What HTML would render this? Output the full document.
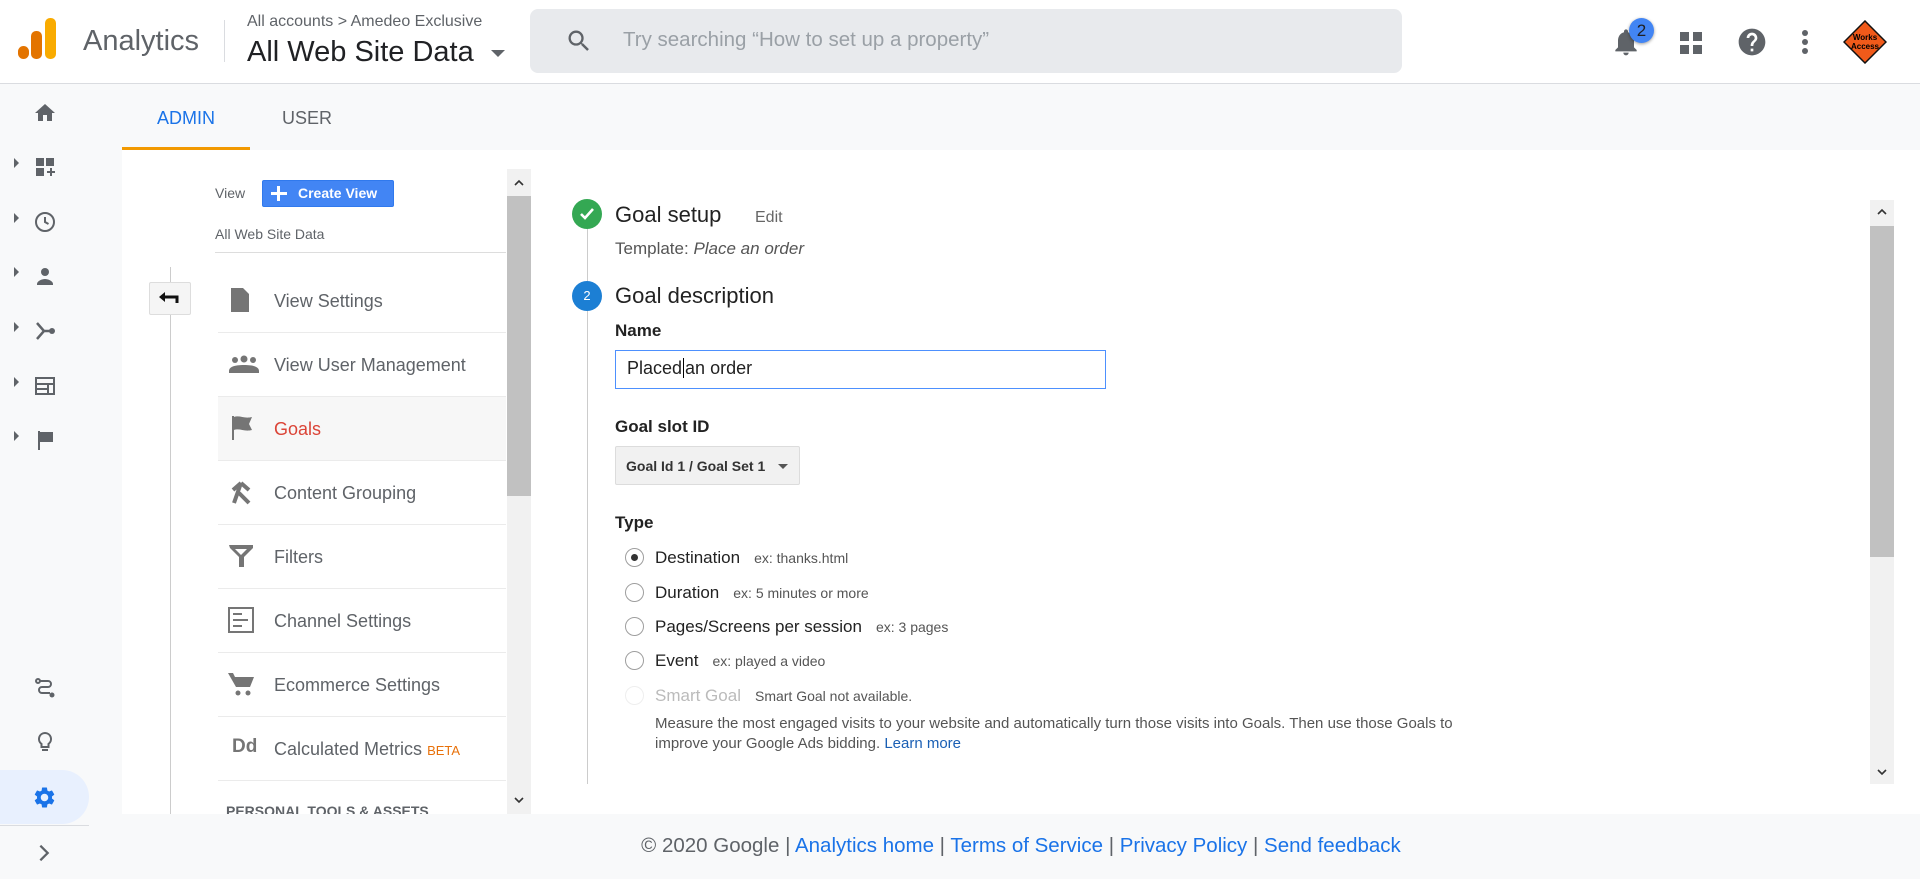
<!DOCTYPE html>
<html><head><meta charset="utf-8">
<style>
*{margin:0;padding:0;box-sizing:border-box}
body{width:1920px;height:879px;overflow:hidden;background:#f8f9fa;font-family:"Liberation Sans",Arial,sans-serif;position:relative;color:#202124}
.a{position:absolute}
.hdr{left:0;top:0;width:1920px;height:84px;background:#fff;border-bottom:1px solid #dadce0}
.nav-item{position:absolute;left:218px;width:288px;height:64px;border-bottom:1px solid #ebebeb}
.nav-item span{position:absolute;left:56px;top:22px;font-size:18px;color:#5f6368}
.nav-item svg{position:absolute;left:10px;top:18px}
.sb svg{position:absolute}
.radio{position:absolute;left:625px;width:19px;height:19px;border:1px solid #9e9e9e;border-radius:50%;background:#fff}
.rl{position:absolute;left:655px;font-size:17px;color:#222}
.rl i{font-style:normal;font-size:14px;color:#555;margin-left:14px}
</style></head><body>
<div class="a hdr"></div>
<div class="a" style="left:18px;top:46px;width:11px;height:13px;border-radius:6px;background:#e37400"></div>
<div class="a" style="left:31px;top:31px;width:11px;height:28px;border-radius:5px;background:#e37400"></div>
<div class="a" style="left:45px;top:18px;width:11px;height:41px;border-radius:5px;background:#f9ab00"></div>
<div class="a" style="left:83px;top:25px;font-size:29px;color:#5f6368">Analytics</div>
<div class="a" style="left:224px;top:20px;width:1px;height:42px;background:#dadce0"></div>
<div class="a" style="left:247px;top:13px;font-size:16px;color:#5f6368">All accounts &gt; Amedeo Exclusive</div>
<div class="a" style="left:247px;top:36px;font-size:29px;color:#202124">All Web Site Data</div>
<div class="a" style="left:491px;top:50px;width:0;height:0;border-left:7px solid transparent;border-right:7px solid transparent;border-top:7px solid #5f6368"></div>
<div class="a" style="left:530px;top:9px;width:872px;height:64px;background:#e8eaed;border-radius:8px"></div>
<svg class="a" style="left:565px;top:27px" width="28" height="28" viewBox="0 0 24 24"><path fill="#5f6368" d="M15.5 14h-.79l-.28-.27A6.47 6.47 0 0016 9.5 6.5 6.5 0 109.5 16c1.61 0 3.09-.59 4.230-1.57l.27.28v.79l5 4.99L20.49 19l-4.99-5zm-6 0C7.01 14 5 11.99 5 9.5S7.01 5 9.5 5 14 7.01 14 9.5 11.99 14 9.5 14z"/></svg>
<div class="a" style="left:623px;top:28px;font-size:20.5px;color:#9aa0a6">Try searching “How to set up a property”</div>
<svg class="a" style="left:1610px;top:26px" width="32" height="32" viewBox="0 0 24 24"><path fill="#5f6368" d="M12 22c1.1 0 2-.9 2-2h-4c0 1.1.9 2 2 2zm6-6v-5c0-3.07-1.63-5.64-4.5-6.320V4c0-.83-.67-1.5-1.5-1.5s-1.5.67-1.5 1.5v.68C7.64 5.36 6 7.92 6 11v5l-2 2v1h16v-1l-2-2z"/></svg>
<div class="a" style="left:1629px;top:18px;width:25px;height:25px;border-radius:50%;background:#4285f4;box-shadow:0 1px 3px rgba(0,0,0,.4);font-size:17px;text-align:center;line-height:25px;color:#202124">2</div>
<div class="a" style="left:1680px;top:32px;width:9px;height:9px;background:#5f6368"></div>
<div class="a" style="left:1693px;top:32px;width:9px;height:9px;background:#5f6368"></div>
<div class="a" style="left:1680px;top:45px;width:9px;height:9px;background:#5f6368"></div>
<div class="a" style="left:1693px;top:45px;width:9px;height:9px;background:#5f6368"></div>
<svg class="a" style="left:1736px;top:26px" width="32" height="32" viewBox="0 0 24 24"><path fill="#5f6368" d="M12 2C6.48 2 2 6.48 2 12s4.48 10 10 10 10-4.48 10-10S17.52 2 12 2zm1 17h-2v-2h2v2zm2.07-7.75l-.9.92C13.45 12.9 13 13.5 13 15h-2v-.5c0-1.1.45-2.1 1.17-2.830l1.24-1.26c.37-.36.59-.86.59-1.41 0-1.1-.9-2-2-2s-2 .9-2 2H8c0-2.21 1.79-4 4-4s4 1.79 4 4c0 .88-.36 1.680-.93 2.25z"/></svg>
<div class="a" style="left:1802px;top:30px;width:6px;height:6px;border-radius:50%;background:#5f6368"></div>
<div class="a" style="left:1802px;top:39px;width:6px;height:6px;border-radius:50%;background:#5f6368"></div>
<div class="a" style="left:1802px;top:48px;width:6px;height:6px;border-radius:50%;background:#5f6368"></div>
<svg class="a" style="left:1843px;top:20px" width="44" height="44" viewBox="0 0 44 44"><path d="M22 1L43 22 22 43 1 22z" fill="#f05a1a" stroke="#111" stroke-width="1.5"/><text x="22" y="20" font-size="8" font-weight="bold" text-anchor="middle" font-family="Liberation Sans Narrow,Liberation Sans">Works</text><text x="22" y="29" font-size="8" font-weight="bold" text-anchor="middle" font-family="Liberation Sans Narrow,Liberation Sans">Access</text></svg>

<div class="sb">
<svg style="left:33px;top:101px" width="24" height="24" viewBox="0 0 24 24"><path fill="#5f6368" d="M10 20v-6h4v6h5v-8h3L12 3 2 12h3v8z"/></svg>
<svg style="left:33px;top:155px" width="24" height="24" viewBox="0 0 24 24"><path fill="#5f6368" d="M3 3h8v8H3zM13 3h8v8h-8zM3 13h8v8H3zM17 13h2v3h3v2h-3v3h-2v-3h-3v-2h3z"/></svg>
<svg style="left:33px;top:210px" width="24" height="24" viewBox="0 0 24 24"><circle cx="12" cy="12" r="9" fill="none" stroke="#5f6368" stroke-width="2"/><path d="M12 7v5l3.5 2" fill="none" stroke="#5f6368" stroke-width="2"/></svg>
<svg style="left:33px;top:264px" width="24" height="24" viewBox="0 0 24 24"><circle cx="12" cy="8" r="4" fill="#5f6368"/><path fill="#5f6368" d="M4 20c0-3 5-5 8-5s8 2 8 5v1H4z"/></svg>
<svg style="left:33px;top:319px" width="24" height="24" viewBox="0 0 24 24"><path d="M4 4l7 8-7 8M11 12h6" fill="none" stroke="#5f6368" stroke-width="2.5"/><circle cx="19" cy="12" r="3" fill="#5f6368"/></svg>
<svg style="left:33px;top:374px" width="24" height="24" viewBox="0 0 24 24"><rect x="3" y="4" width="18" height="16" fill="none" stroke="#5f6368" stroke-width="2"/><path d="M3 10h18M3 15h12M15 10v10" stroke="#5f6368" stroke-width="2"/></svg>
<svg style="left:33px;top:428px" width="24" height="24" viewBox="0 0 24 24"><path fill="#5f6368" d="M5 3h2v19H5zM7 4h13v10H7z"/></svg>
<svg style="left:33px;top:676px" width="24" height="24" viewBox="0 0 24 24"><circle cx="5" cy="5" r="2" fill="none" stroke="#5f6368" stroke-width="2"/><circle cx="19" cy="19" r="2.5" fill="#5f6368"/><path d="M7 5h8a3 3 0 010 6H9a3 3 0 000 6h8" fill="none" stroke="#5f6368" stroke-width="2"/></svg>
<svg style="left:33px;top:730px" width="24" height="24" viewBox="0 0 24 24"><path d="M12 3a6 6 0 00-3.5 10.9V17h7v-3.1A6 6 0 0012 3z M9 20h6" fill="none" stroke="#5f6368" stroke-width="2"/></svg>
</div>
<div class="a" style="left:14px;top:158px;border-top:5px solid transparent;border-bottom:5px solid transparent;border-left:5px solid #5f6368"></div>
<div class="a" style="left:14px;top:213px;border-top:5px solid transparent;border-bottom:5px solid transparent;border-left:5px solid #5f6368"></div>
<div class="a" style="left:14px;top:267px;border-top:5px solid transparent;border-bottom:5px solid transparent;border-left:5px solid #5f6368"></div>
<div class="a" style="left:14px;top:322px;border-top:5px solid transparent;border-bottom:5px solid transparent;border-left:5px solid #5f6368"></div>
<div class="a" style="left:14px;top:377px;border-top:5px solid transparent;border-bottom:5px solid transparent;border-left:5px solid #5f6368"></div>
<div class="a" style="left:14px;top:431px;border-top:5px solid transparent;border-bottom:5px solid transparent;border-left:5px solid #5f6368"></div>
<div class="a" style="left:0;top:770px;width:89px;height:54px;background:#e8f0fe;border-radius:0 27px 27px 0"></div>
<svg class="a" style="left:32px;top:785px" width="25" height="25" viewBox="0 0 24 24"><path fill="#1a73e8" d="M19.14 12.94c.04-.3.06-.61.06-.94 0-.32-.02-.64-.07-.94l2.03-1.58a.49.49 0 00.12-.61l-1.92-3.32a.488.488 0 00-.59-.22l-2.39.96c-.5-.38-1.03-.7-1.62-.94l-.36-2.54a.484.484 0 00-.48-.41h-3.84c-.24 0-.43.17-.47.41l-.36 2.54c-.59.24-1.13.57-1.62.94l-2.39-.96c-.22-.08-.47 0-.59.22L2.74 8.87c-.12.21-.08.47.12.61l2.03 1.58c-.05.3-.09.63-.09.94s.02.64.07.94l-2.03 1.58a.49.49 0 00-.12.61l1.92 3.32c.12.22.37.29.59.22l2.39-.96c.5.38 1.030.7 1.62.94l.36 2.54c.05.24.24.41.48.41h3.84c.24 0 .44-.17.47-.41l.36-2.54c.59-.24 1.13-.56 1.62-.94l2.39.96c.22.08.47 0 .59-.22l1.92-3.32c.12-.22.07-.47-.12-.61l-2.01-1.58zM12 15.6c-1.98 0-3.6-1.62-3.6-3.6s1.62-3.6 3.6-3.6 3.6 1.62 3.6 3.6-1.62 3.6-3.6 3.6z"/></svg>
<div class="a" style="left:0;top:825px;width:89px;height:1px;background:#dadce0"></div>
<svg class="a" style="left:33px;top:842px" width="22" height="22" viewBox="0 0 24 24"><path d="M8 4l8 8-8 8" fill="none" stroke="#5f6368" stroke-width="2.5"/></svg>

<div class="a" style="left:157px;top:108px;font-size:18px;color:#1a73e8">ADMIN</div>
<div class="a" style="left:282px;top:108px;font-size:18px;color:#5f6368">USER</div>
<div class="a" style="left:122px;top:147px;width:128px;height:3px;background:#f29900"></div>

<div class="a" style="left:122px;top:150px;width:1798px;height:664px;background:#fff"></div>

<div class="a" style="left:215px;top:185px;font-size:14px;color:#5f6368">View</div>
<div class="a" style="left:262px;top:180px;width:132px;height:27px;background:#4285f4;border:1px solid #3079ed;border-radius:2px;color:#fff;font-size:14px;font-weight:bold;line-height:25px;padding-left:35px">Create View</div>
<div class="a" style="left:271px;top:192px;width:16px;height:3px;background:#fff"></div>
<div class="a" style="left:277px;top:186px;width:3px;height:15px;background:#fff"></div>
<div class="a" style="left:215px;top:226px;font-size:14px;color:#5f6368">All Web Site Data</div>
<div class="a" style="left:215px;top:252px;width:291px;height:1px;background:#ddd"></div>
<div class="a" style="left:170px;top:267px;width:1px;height:547px;background:#ccc"></div>
<div class="a" style="left:149px;top:282px;width:42px;height:33px;background:#f5f5f5;border:1px solid #ddd;border-radius:2px"></div>
<svg class="a" style="left:158px;top:287px" width="24" height="22" viewBox="0 0 24 22"><path d="M4 10h15v6" fill="none" stroke="#111" stroke-width="3"/><path d="M1 10l6-5v10z" fill="#111"/></svg>

<div class="nav-item" style="top:269px"><svg width="24" height="26" viewBox="0 0 24 26"><path fill="#757575" d="M3 1h12l6 6v18H3z"/></svg><span>View Settings</span></div>
<div class="nav-item" style="top:333px"><svg width="32" height="26" viewBox="0 0 32 26"><circle cx="7" cy="9" r="3" fill="#757575"/><circle cx="16" cy="8" r="3.5" fill="#757575"/><circle cx="25" cy="9" r="3" fill="#757575"/><path fill="#757575" d="M1 20c0-4 5-6 15-6s15 2 15 6v2H1z"/></svg><span>View User Management</span></div>
<div class="nav-item" style="top:397px;background:#f7f7f7"><svg width="28" height="26" viewBox="0 0 28 26"><path fill="#757575" d="M4 1h2v24H4zM6 2c6-2 10 2 18 0l-3 7 3 6c-8 2-12-2-18 0z"/></svg><span style="color:#db4437">Goals</span></div>
<div class="nav-item" style="top:461px"><svg width="26" height="26" viewBox="0 0 26 26"><path d="M13 4L6 24M13 4l-8 7M13 4l8 7M11 14l10 10" fill="none" stroke="#757575" stroke-width="4"/></svg><span>Content Grouping</span></div>
<div class="nav-item" style="top:525px"><svg width="26" height="26" viewBox="0 0 26 26"><path fill="#757575" d="M1 2h24v3l-9 9v10h-5V14L2 5z"/><path fill="#fff" d="M7 6h12l-6 6z"/></svg><span>Filters</span></div>
<div class="nav-item" style="top:589px"><svg width="26" height="26" viewBox="0 0 26 26"><rect x="1" y="1" width="24" height="24" fill="none" stroke="#757575" stroke-width="2"/><path d="M5 7h9M5 13h15M5 19h9" stroke="#757575" stroke-width="2"/></svg><span>Channel Settings</span></div>
<div class="nav-item" style="top:653px"><svg width="26" height="26" viewBox="0 0 26 26"><path fill="#757575" d="M0 2h5l2 4h19l-4 10H8z"/><circle cx="10" cy="22" r="2.5" fill="#757575"/><circle cx="20" cy="22" r="2.5" fill="#757575"/></svg><span>Ecommerce Settings</span></div>
<div class="nav-item" style="top:717px"><div class="a" style="left:14px;top:19px;font-size:19px;font-weight:bold;color:#757575">Dd</div><span>Calculated Metrics <b style="font-weight:normal;font-size:13px;color:#e8710a">BETA</b></span></div>
<div class="a" style="left:226px;top:803px;font-size:14px;font-weight:bold;color:#5f6368;height:11px;overflow:hidden;line-height:16px">PERSONAL TOOLS &amp; ASSETS</div>
<div class="a" style="left:507px;top:169px;width:24px;height:645px;background:#f1f1f1"></div>
<div class="a" style="left:507px;top:196px;width:24px;height:300px;background:#c1c1c1"></div>
<svg class="a" style="left:512px;top:176px" width="14" height="14" viewBox="0 0 14 14"><path d="M3 9l4-4 4 4" fill="none" stroke="#333" stroke-width="1.6"/></svg>
<svg class="a" style="left:512px;top:793px" width="14" height="14" viewBox="0 0 14 14"><path d="M3 5l4 4 4-4" fill="none" stroke="#333" stroke-width="1.6"/></svg>

<div class="a" style="left:587px;top:214px;width:1px;height:570px;background:#ccc"></div>
<div class="a" style="left:572px;top:199px;width:30px;height:30px;border-radius:50%;background:#34a853"></div>
<svg class="a" style="left:578px;top:205px" width="18" height="18" viewBox="0 0 18 18"><path d="M3 9l4 4 8-9" fill="none" stroke="#fff" stroke-width="2.6"/></svg>
<div class="a" style="left:615px;top:202px;font-size:22px;color:#222">Goal setup</div>
<div class="a" style="left:755px;top:209px;font-size:16px;color:#666">Edit</div>
<div class="a" style="left:615px;top:239px;font-size:17px;color:#555">Template: <i>Place an order</i></div>
<div class="a" style="left:572px;top:281px;width:30px;height:30px;border-radius:50%;background:#1c7fd4;color:#fff;font-size:13px;text-align:center;line-height:30px">2</div>
<div class="a" style="left:615px;top:283px;font-size:22px;color:#222">Goal description</div>
<div class="a" style="left:615px;top:321px;font-size:17px;font-weight:bold;color:#222">Name</div>
<div class="a" style="left:615px;top:350px;width:491px;height:39px;border:1px solid #4d90fe;background:#fff"></div>
<div class="a" style="left:627px;top:358px;font-size:18px;color:#222">Placed<span style="border-left:1px solid #000;margin:0 1px"></span>an order</div>
<div class="a" style="left:615px;top:417px;font-size:17px;font-weight:bold;color:#222">Goal slot ID</div>
<div class="a" style="left:615px;top:446px;width:185px;height:39px;border:1px solid #dcdcdc;background:#f1f1f1;border-radius:2px"></div>
<div class="a" style="left:626px;top:458px;font-size:14px;font-weight:bold;color:#333">Goal Id 1 / Goal Set 1</div>
<div class="a" style="left:778px;top:464px;border-left:5px solid transparent;border-right:5px solid transparent;border-top:5px solid #555"></div>
<div class="a" style="left:615px;top:513px;font-size:17px;font-weight:bold;color:#222">Type</div>
<div class="radio" style="top:548px"></div>
<div class="a" style="left:631px;top:554px;width:7px;height:7px;border-radius:50%;background:#333"></div>
<div class="rl" style="top:548px">Destination<i>ex: thanks.html</i></div>
<div class="radio" style="top:583px"></div>
<div class="rl" style="top:583px">Duration<i>ex: 5 minutes or more</i></div>
<div class="radio" style="top:617px"></div>
<div class="rl" style="top:617px">Pages/Screens per session<i>ex: 3 pages</i></div>
<div class="radio" style="top:651px"></div>
<div class="rl" style="top:651px">Event<i>ex: played a video</i></div>
<div class="radio" style="top:686px;border-color:#eee"></div>
<div class="rl" style="top:686px;color:#bbb">Smart Goal<i>Smart Goal not available.</i></div>
<div class="a" style="left:655px;top:714px;font-size:15px;color:#555;line-height:20px;width:820px">Measure the most engaged visits to your website and automatically turn those visits into Goals. Then use those Goals to improve your Google Ads bidding. <span style="color:#1a5fb4">Learn more</span></div>
<div class="a" style="left:1870px;top:200px;width:24px;height:584px;background:#f1f1f1"></div>
<div class="a" style="left:1870px;top:226px;width:24px;height:331px;background:#c1c1c1"></div>
<svg class="a" style="left:1875px;top:205px" width="14" height="14" viewBox="0 0 14 14"><path d="M3 9l4-4 4 4" fill="none" stroke="#333" stroke-width="1.6"/></svg>
<svg class="a" style="left:1875px;top:765px" width="14" height="14" viewBox="0 0 14 14"><path d="M3 5l4 4 4-4" fill="none" stroke="#333" stroke-width="1.6"/></svg>

<div class="a" style="left:0;top:834px;width:2042px;text-align:center;font-size:20.5px;color:#5f6368">© 2020 Google | <span style="color:#1a73e8">Analytics home</span> | <span style="color:#1a73e8">Terms of Service</span> | <span style="color:#1a73e8">Privacy Policy</span> | <span style="color:#1a73e8">Send feedback</span></div>
</body></html>
